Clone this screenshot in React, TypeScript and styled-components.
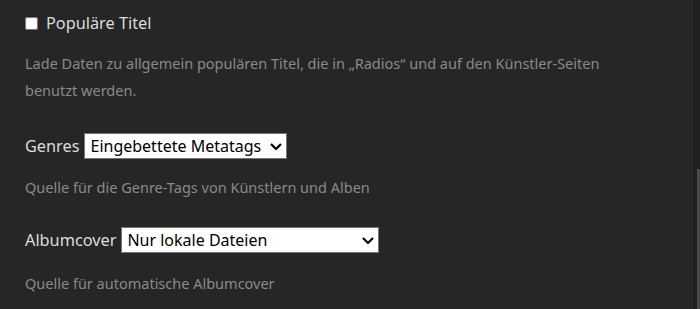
import React from "react";
import styled, { createGlobalStyle } from "styled-components";

const GlobalStyle = createGlobalStyle`
  html, body {
    margin: 0;
    padding: 0;
    background: #262626;
    overflow: hidden;
  }
  body {
    font-family: "Noto Sans", "Open Sans", sans-serif;
  }
`;

const Page = styled.div`
  display: flex;
  width: 700px;
  height: 309px;
  overflow: hidden;
`;

const Content = styled.div`
  flex: 1;
  display: flex;
  flex-direction: column;
  padding: 11px 0 0 25px;
`;

const Track = styled.div`
  width: 7px;
  display: flex;
  flex-direction: column;
  align-items: flex-end;
  background: #202020;
`;

const Thumb = styled.div`
  margin-top: 169px;
  width: 3px;
  flex: 1;
  background: #4b4b4b;
`;

const Setting = styled.div`
  display: flex;
  flex-direction: column;
`;

const Row = styled.div<{ $top?: number }>`
  display: flex;
  align-items: center;
  gap: 5px;
  height: 24px;
  margin-top: ${(p) => p.$top ?? 0}px;
  font-size: 16.3px;
  color: #dcdcdc;
`;

const CheckRow = styled(Row).attrs({ as: "label" })`
  gap: 8px;
`;

const Checkbox = styled.input`
  margin: 0;
  width: 13px;
  height: 13px;
`;

const Hint = styled.p<{ $top: number }>`
  margin: ${(p) => p.$top}px 0 0;
  font-size: 14.5px;
  line-height: 27px;
  color: #8a8a8a;
`;

const SelectWrap = styled.span`
  position: relative;
  display: inline-flex;
`;

const Select = styled.select<{ $width: number }>`
  appearance: none;
  width: ${(p) => p.$width}px;
  height: 26px;
  margin: 0;
  padding: 0 20px 0 5px;
  border: 1px solid #767676;
  border-radius: 0;
  background: #ffffff;
  color: #000000;
  font-family: inherit;
  font-size: 16px;
`;

const Arrow = styled.svg`
  position: absolute;
  right: 5px;
  top: 10px;
  pointer-events: none;
`;

function Chevron() {
  return (
    <Arrow width="12" height="7" viewBox="0 0 12 7">
      <polyline points="1,1 6,6 11,1" fill="none" stroke="#000" strokeWidth="2.2" />
    </Arrow>
  );
}

export default function App() {
  return (
    <Page>
      <GlobalStyle />
      <Content>
        <Setting>
          <CheckRow>
            <Checkbox type="checkbox" />
            Populäre Titel
          </CheckRow>
          <Hint $top={15}>
            Lade Daten zu allgemein populären Titel, die in „Radios“ und auf den Künstler-Seiten
            <br />
            benutzt werden.
          </Hint>
        </Setting>
        <Setting>
          <Row $top={30}>
            Genres
            <SelectWrap>
              <Select $width={203} defaultValue="embedded">
                <option value="embedded">Eingebettete Metatags</option>
              </Select>
              <Chevron />
            </SelectWrap>
          </Row>
          <Hint $top={16}>Quelle für die Genre-Tags von Künstlern und Alben</Hint>
        </Setting>
        <Setting>
          <Row $top={27}>
            Albumcover
            <SelectWrap>
              <Select $width={258} defaultValue="local">
                <option value="local">Nur lokale Dateien</option>
              </Select>
              <Chevron />
            </SelectWrap>
          </Row>
          <Hint $top={18}>Quelle für automatische Albumcover</Hint>
        </Setting>
      </Content>
      <Track>
        <Thumb />
      </Track>
    </Page>
  );
}
